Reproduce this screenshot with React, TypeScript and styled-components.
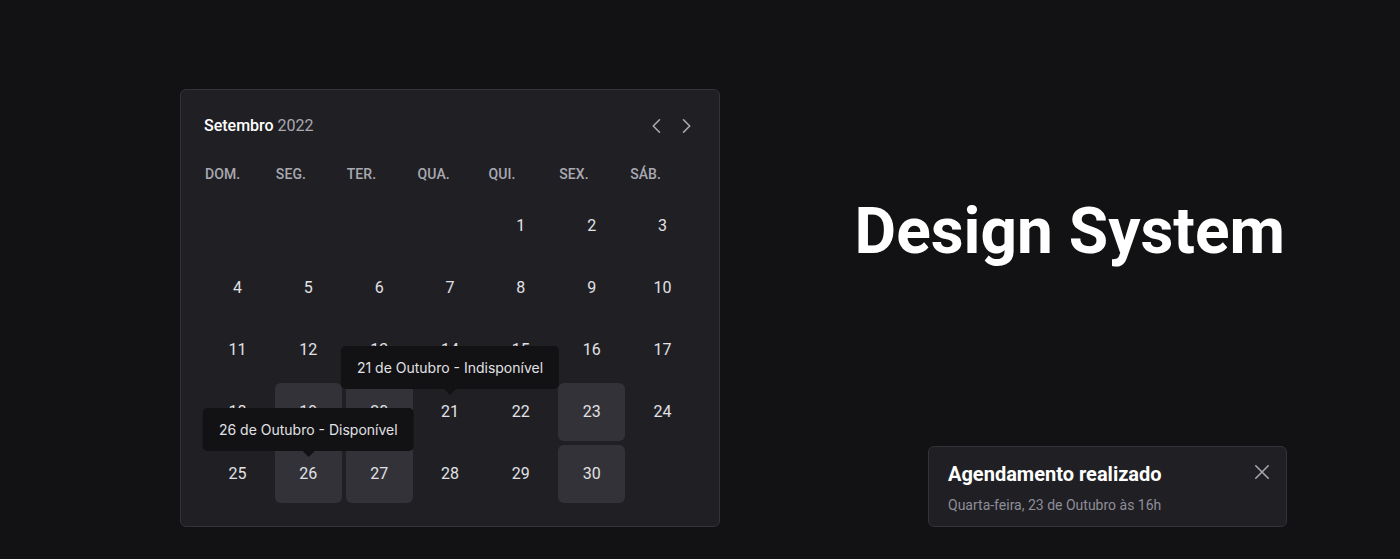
import React from 'react';
import styled, { createGlobalStyle } from 'styled-components';

const Global = createGlobalStyle`
  html, body { margin: 0; padding: 0; background: #121214; }
  body {
    font-family: Roboto, "Liberation Sans", Arial, sans-serif;
    -webkit-font-smoothing: antialiased;
  }
  * { box-sizing: border-box; }
`;

const Page = styled.main`
  width: 1400px;
  height: 559px;
  display: flex;
  justify-content: space-between;
  align-items: flex-start;
  padding: 89px 113px 0 180px;
  background: #121214;
`;

const Card = styled.section`
  width: 540px;
  background: #202024;
  border: 1px solid #323238;
  border-radius: 6px;
  padding: 24px 23px 23px;
`;

const Header = styled.header`
  display: flex;
  align-items: center;
  justify-content: space-between;
  height: 24px;
`;

const Title = styled.p`
  margin: 0;
  font-size: 16px;
  line-height: 24px;
  font-weight: 500;
  color: #ffffff;
  span {
    font-weight: 400;
    color: #a9a9b2;
  }
`;

const Nav = styled.div`
  display: flex;
  align-items: center;
  gap: 9px;
`;

const NavButton = styled.button`
  width: 20px;
  height: 20px;
  padding: 0;
  border: 0;
  background: transparent;
  color: #a9a9b2;
  display: flex;
  align-items: center;
  justify-content: center;
  cursor: pointer;
`;

const Grid = styled.div<{ $top: number }>`
  display: grid;
  grid-template-columns: repeat(7, 1fr);
  column-gap: 4px;
  row-gap: 4px;
  margin-top: ${(p) => p.$top}px;
`;

const WeekDay = styled.span`
  font-size: 14px;
  line-height: 20px;
  font-weight: 500;
  color: #a9a9b2;
  text-transform: uppercase;
  letter-spacing: 0.1px;
  padding-left: 1px;
`;

const Day = styled.div<{ $available?: boolean }>`
  position: relative;
  height: 58px;
  display: flex;
  align-items: center;
  justify-content: center;
  border-radius: 6px;
  font-size: 16px;
  line-height: 24px;
  color: #e1e1e6;
  background: ${(p) => (p.$available ? '#323238' : 'transparent')};
`;

const Tooltip = styled.div`
  position: absolute;
  bottom: calc(100% - 6px);
  left: 50%;
  transform: translateX(-50%);
  z-index: 2;
  white-space: nowrap;
  padding: 12px 16px;
  border-radius: 5px;
  background: #121214;
  color: #e1e1e6;
  font-family: Inter, Roboto, sans-serif;
  font-size: 14px;
  line-height: 19px;
  &::after {
    content: '';
    position: absolute;
    top: 100%;
    left: 50%;
    transform: translateX(-50%);
    border-left: 6px solid transparent;
    border-right: 6px solid transparent;
    border-top: 6px solid #121214;
  }
`;

const Side = styled.div`
  display: flex;
  flex-direction: column;
  align-items: flex-end;
`;

const Heading = styled.h1`
  margin: 105px 2px 0 0;
  font-size: 64px;
  line-height: 75px;
  font-weight: 700;
  color: #ffffff;
`;

const Toast = styled.div`
  margin-top: 177px;
  width: 359px;
  display: grid;
  grid-template-columns: 1fr auto;
  background: #202024;
  border: 1px solid #323238;
  border-radius: 6px;
  padding: 11px 14px 11px 19px;
`;

const ToastTitle = styled.strong`
  display: block;
  font-size: 20px;
  line-height: 32px;
  font-weight: 700;
  color: #ffffff;
`;

const ToastText = styled.p`
  margin: 5px 0 0;
  font-size: 14px;
  line-height: 20px;
  color: #8d8d99;
`;

const CloseButton = styled.button`
  margin-top: 4px;
  width: 20px;
  height: 20px;
  padding: 0;
  border: 0;
  background: transparent;
  color: #a9a9b2;
  display: flex;
  align-items: center;
  justify-content: center;
  cursor: pointer;
`;

const Caret = ({ dir }: { dir: 'left' | 'right' }) => (
  <svg width="20" height="20" viewBox="0 0 20 20" fill="none">
    <polyline
      points={dir === 'left' ? '12.5,3.75 6.25,10 12.5,16.25' : '7.5,3.75 13.75,10 7.5,16.25'}
      stroke="currentColor"
      strokeWidth="1.6"
      strokeLinecap="round"
      strokeLinejoin="round"
    />
  </svg>
);

const XIcon = () => (
  <svg width="20" height="20" viewBox="0 0 20 20" fill="none">
    <path d="M3.75 3.75 L16.25 16.25 M16.25 3.75 L3.75 16.25" stroke="currentColor" strokeWidth="1.5" strokeLinecap="round" />
  </svg>
);

const weekDays = ['dom.', 'seg.', 'ter.', 'qua.', 'qui.', 'sex.', 'sáb.'];
const available = new Set([19, 20, 23, 26, 27, 30]);
const tooltips: Record<number, string> = {
  21: '21 de Outubro - Indisponível',
  26: '26 de Outubro - Disponível',
};

export default function App() {
  const cells: (number | null)[] = [null, null, null, null];
  for (let d = 1; d <= 30; d++) cells.push(d);
  cells.push(null);

  return (
    <>
      <Global />
      <Page>
        <Card>
          <Header>
            <Title>
              Setembro <span>2022</span>
            </Title>
            <Nav>
              <NavButton aria-label="Mês anterior">
                <Caret dir="left" />
              </NavButton>
              <NavButton aria-label="Próximo mês">
                <Caret dir="right" />
              </NavButton>
            </Nav>
          </Header>
          <Grid $top={26}>
            {weekDays.map((w) => (
              <WeekDay key={w}>{w}</WeekDay>
            ))}
          </Grid>
          <Grid $top={13}>
            {cells.map((d, i) => (
              <Day key={i} $available={d !== null && available.has(d)}>
                {d}
                {d !== null && tooltips[d] && <Tooltip>{tooltips[d]}</Tooltip>}
              </Day>
            ))}
          </Grid>
        </Card>
        <Side>
          <Heading>Design System</Heading>
          <Toast>
            <div>
              <ToastTitle>Agendamento realizado</ToastTitle>
              <ToastText>Quarta-feira, 23 de Outubro às 16h</ToastText>
            </div>
            <CloseButton aria-label="Fechar">
              <XIcon />
            </CloseButton>
          </Toast>
        </Side>
      </Page>
    </>
  );
}
